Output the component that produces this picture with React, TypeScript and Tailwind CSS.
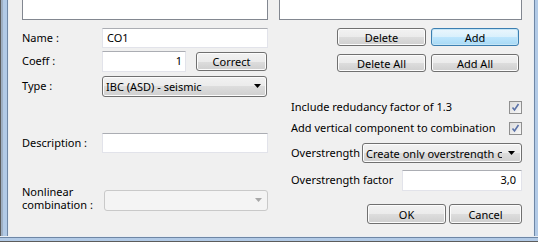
import React from "react";

const btn =
  "flex items-center justify-center rounded-[3px] border border-[#707070] bg-[linear-gradient(to_bottom,#f2f2f2_0%,#ebebeb_50%,#dddddd_50%,#cfcfcf_100%)] shadow-[inset_0_0_0_1px_#fcfcfc] text-black leading-none whitespace-nowrap";
const btnDefault =
  "flex items-center justify-center rounded-[3px] border border-[#3c7fb1] bg-[linear-gradient(to_bottom,#eaf6fd_0%,#d9f0fc_50%,#bee6fd_50%,#a7d9f5_100%)] shadow-[inset_0_0_0_1px_#c4e5f6] text-black leading-none whitespace-nowrap";
const input =
  "bg-white border border-[#e2e3ea] border-t-[#abadb3] flex items-center";

function Check() {
  return (
    <div className="w-[13px] h-[13px] border border-[#8f8f8f] bg-[linear-gradient(to_bottom_right,#dcdcdc,#f8f8f8)] flex items-center justify-center shrink-0">
      <svg width="11" height="11" viewBox="0 0 11 11">
        <path d="M2.5 5.5 L4.5 8 L8.5 2" fill="none" stroke="#5b72a8" strokeWidth="1.6" />
      </svg>
    </div>
  );
}

function Arrow({ color = "#000" }: { color?: string }) {
  return (
    <svg width="8" height="5" viewBox="0 0 8 5" className="shrink-0">
      <path d="M0 0 H7 L3.5 4 Z" fill={color} />
    </svg>
  );
}

export default function App() {
  return (
    <div
      className="w-[538px] h-[242px] flex flex-col overflow-hidden text-[11px] text-black"
      style={{ fontFamily: '"Noto Sans", "Open Sans", sans-serif' }}
    >
      <div className="flex flex-1 min-h-0">
        <div className="w-[9px] bg-[linear-gradient(to_right,#5c5c5c_0px,#5c5c5c_1px,#9fb0c4_1px,#9fb0c4_3px,#b2cae6_3px,#b2cae6_7px,#6f87a5_7px,#6f87a5_8px,#e9eef4_8px)]" />
        <div className="flex-1 bg-[#f0f0f0] flex pl-[13px]">
          {/* Left column */}
          <div className="w-[246px] flex flex-col">
            <div className="h-[20px] border-x border-b border-[#828790] bg-white" />
            <div className="mt-[8px] flex items-center h-[20px]">
              <div className="w-[80px] whitespace-nowrap">Name :</div>
              <div className={`${input} w-[166px] h-[20px] pl-[4px]`}>CO1</div>
            </div>
            <div className="mt-[3px] flex items-center h-[20px]">
              <div className="w-[80px] whitespace-nowrap">Coeff :</div>
              <div className={`${input} w-[84px] h-[21px] justify-end pr-[3px]`}>1</div>
              <div className={`${btn} ml-[10px] w-[71px] h-[19px]`}>Correct</div>
            </div>
            <div className="mt-[5px] flex items-center h-[20px]">
              <div className="w-[80px] whitespace-nowrap">Type :</div>
              <div className={`${btn} w-[165px] h-[21px] justify-between! pl-[3px] pr-[4px]`}>
                <span>IBC (ASD) - seismic</span>
                <Arrow />
              </div>
            </div>
            <div className="mt-[37px] flex items-center h-[20px]">
              <div className="w-[80px] whitespace-nowrap">Description :</div>
              <div className={`${input} w-[166px] h-[20px]`} />
            </div>
            <div className="mt-[32px] flex items-center h-[27px]">
              <div className="w-[82px] flex flex-col">
                <div className="h-[13px] leading-[13px] whitespace-nowrap">Nonlinear</div>
                <div className="h-[14px] leading-[14px] whitespace-nowrap">combination :</div>
              </div>
              <div className="w-[164px] h-[21px] mt-[4px] rounded-[3px] border border-[#c9c9c9] bg-[#f4f4f4] flex items-center justify-end pr-[4px]">
                <Arrow color="#a8a8a8" />
              </div>
            </div>
          </div>
          {/* Right column */}
          <div className="ml-[11px] w-[243px] flex flex-col">
            <div className="h-[20px] border-x border-b border-[#828790] bg-white" />
            <div className="mt-[8px] flex h-[18px] pl-[58px]">
              <div className={`${btn} w-[89px] h-[18px]`}>Delete</div>
              <div className={`${btnDefault} ml-[5px] w-[88px] h-[18px]`}>Add</div>
            </div>
            <div className="mt-[8px] flex h-[18px] pl-[58px]">
              <div className={`${btn} w-[89px] h-[18px]`}>Delete All</div>
              <div className={`${btn} ml-[5px] w-[88px] h-[18px]`}>Add All</div>
            </div>
            <div className="mt-[28px] flex items-center justify-between h-[14px] pl-[12px]">
              <span className="whitespace-nowrap">Include redudancy factor of 1.3</span>
              <Check />
            </div>
            <div className="mt-[7px] flex items-center justify-between h-[14px] pl-[12px]">
              <span className="whitespace-nowrap">Add vertical component to combination</span>
              <Check />
            </div>
            <div className="mt-[8px] flex items-center h-[20px] pl-[12px]">
              <span className="w-[71px] whitespace-nowrap">Overstrength</span>
              <div className={`${btn} w-[160px] h-[20px] justify-between! pl-[3px] pr-[5px] overflow-hidden`}>
                <span className="whitespace-nowrap overflow-hidden w-[136px]">Create only overstrength c</span>
                <Arrow />
              </div>
            </div>
            <div className="mt-[7px] flex items-center h-[21px] pl-[12px]">
              <span className="w-[111px] whitespace-nowrap">Overstrength factor</span>
              <div className={`${input} w-[120px] h-[21px] justify-end pr-[5px]`}>3,0</div>
            </div>
            <div className="mt-[13px] flex h-[20px] pl-[88px]">
              <div className={`${btn} w-[79px] h-[20px]`}>OK</div>
              <div className={`${btn} ml-[3px] w-[73px] h-[20px]`}>Cancel</div>
            </div>
          </div>
        </div>
        <div className="w-[5px] bg-[linear-gradient(to_right,#e9eef4_0px,#e9eef4_1px,#6f87a5_1px,#6f87a5_2px,#b2cae6_2px)]" />
      </div>
      <div className="h-[6px] bg-[linear-gradient(to_bottom,#e9eef4_0px,#e9eef4_1px,#6f87a5_1px,#6f87a5_2px,#b2cae6_2px,#b2cae6_5px,#5c5c5c_5px)]" />
    </div>
  );
}
